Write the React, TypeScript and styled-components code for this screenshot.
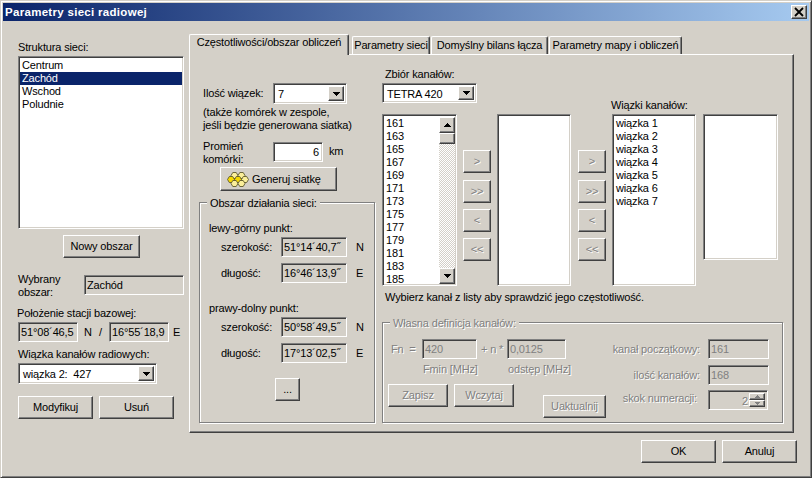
import React from "react";
import styled, {createGlobalStyle, css} from "styled-components";

const face = "#d4d0c8";
const grayText = "#808080";

const raised = css`
  border: 1px solid;
  border-color: #fff #404040 #404040 #fff;
  box-shadow: inset -1px -1px ${grayText};
`;

const sunken = css`
  border: 1px solid;
  border-color: ${grayText} #fff #fff ${grayText};
  box-shadow: inset 1px 1px #404040, inset -1px -1px ${face};
`;

const disabledText = css`
  color: ${grayText};
  text-shadow: 1px 1px 0 #fff;
`;

const GlobalStyle = createGlobalStyle`
  * {
    box-sizing: border-box;
  }
  html, body {
    margin: 0;
    padding: 0;
    background: ${face};
  }
  body {
    font-family: "Liberation Sans", Arial, sans-serif;
    font-size: 11px;
    letter-spacing: -0.15px;
    line-height: 13px;
    color: #000;
  }
`;

const Window = styled.div`
  width: 812px;
  height: 478px;
  padding: 2px;
  background: ${face};
  border: 1px solid;
  border-color: ${face} #404040 #404040 ${face};
  box-shadow: inset 1px 1px #fff, inset -1px -1px ${grayText};
  overflow: hidden;
`;

const TitleBar = styled.div`
  height: 18px;
  display: flex;
  align-items: center;
  justify-content: space-between;
  padding: 0 2px;
  background: linear-gradient(90deg, #0a246a, #a6caf0);
`;

const TitleText = styled.div`
  color: #fff;
  font-weight: bold;
  font-size: 11.5px;
  letter-spacing: 0.3px;
`;

const CloseButton = styled.div`
  width: 16px;
  height: 14px;
  display: flex;
  align-items: center;
  justify-content: center;
  background: ${face};
  ${raised}
`;

const Body = styled.div`
  display: flex;
  padding-left: 15px;
`;

const LeftColumn = styled.div`
  width: 166px;
  padding-top: 20px;
  display: flex;
  flex-direction: column;
`;

const Caption = styled.div<{$mt?: number; $ml?: number}>`
  margin-top: ${p => p.$mt ?? 0}px;
  margin-left: ${p => p.$ml ?? 0}px;
  white-space: nowrap;
`;

const ListBox = styled.div<{$w: number; $h: number; $mt?: number; $ml?: number}>`
  width: ${p => p.$w}px;
  height: ${p => p.$h}px;
  margin-top: ${p => p.$mt ?? 0}px;
  margin-left: ${p => p.$ml ?? 0}px;
  flex: none;
  display: flex;
  padding: 2px 1px 1px;
  background: #fff;
  ${sunken}
`;

const ListItems = styled.div`
  flex: 1;
  min-width: 0;
`;

const ListItem = styled.div<{$selected?: boolean}>`
  height: 13px;
  padding-left: 2px;
  white-space: nowrap;
  background: ${p => (p.$selected ? "#0a246a" : "transparent")};
  color: ${p => (p.$selected ? "#fff" : "#000")};
`;

const Button = styled.div<{$w: number; $h?: number; $disabled?: boolean}>`
  width: ${p => p.$w}px;
  height: ${p => p.$h ?? 23}px;
  flex: none;
  display: flex;
  align-items: center;
  justify-content: center;
  background: ${face};
  white-space: nowrap;
  ${raised}
  ${p => p.$disabled && disabledText}
`;

const NewAreaButton = styled(Button)`
  margin: 6px 0 0 45px;
`;

const SelectedRow = styled.div`
  display: flex;
  justify-content: space-between;
  margin-top: 15px;
  height: 26px;
`;

const TextField = styled.div<{$w: number; $disabled?: boolean; $right?: boolean}>`
  width: ${p => p.$w}px;
  height: 20px;
  flex: none;
  padding: 0 3px 0 2px;
  line-height: 18px;
  white-space: nowrap;
  overflow: hidden;
  background: ${p => (p.$right ? "#fff" : face)};
  text-align: ${p => (p.$right ? "right" : "left")};
  color: ${p => (p.$disabled ? grayText : "#000")};
  text-shadow: none;
  ${sunken}
`;

const SelectedField = styled(TextField)`
  margin-top: 2px;
`;

const InlineRow = styled.div<{$mt?: number}>`
  display: flex;
  align-items: center;
  margin-top: ${p => p.$mt ?? 0}px;
`;

const RowText = styled.span<{$ml: number; $w?: number}>`
  margin-left: ${p => p.$ml}px;
  width: ${p => (p.$w ? `${p.$w}px` : "auto")};
  flex: none;
  white-space: nowrap;
`;

const Combo = styled.div<{$w: number; $h?: number}>`
  width: ${p => p.$w}px;
  height: ${p => p.$h ?? 21}px;
  flex: none;
  display: flex;
  align-items: stretch;
  padding: 2px 2px 2px 3px;
  background: #fff;
  ${sunken}
`;

const ComboValue = styled.div`
  flex: 1;
  line-height: 16px;
  padding-left: 1px;
  white-space: nowrap;
  overflow: hidden;
`;

const ArrowButton = styled.div<{$h?: number}>`
  width: 16px;
  height: ${p => (p.$h ? `${p.$h}px` : "auto")};
  flex: none;
  display: flex;
  align-items: center;
  justify-content: center;
  background: ${face};
  ${raised}
`;

const ComboMargin = styled.div`
  margin-top: 2px;
`;

const ButtonRow = styled.div<{$mt: number}>`
  display: flex;
  gap: 6px;
  margin-top: ${p => p.$mt}px;
`;

const RightColumn = styled.div`
  width: 608px;
  margin-left: 5px;
  padding-top: 13px;
`;

const TabStrip = styled.div`
  display: flex;
  align-items: flex-end;
  height: 20px;
  padding-right: 3px;
`;

const Tab = styled.div<{$active?: boolean; $w: number; $ml?: number}>`
  position: relative;
  z-index: ${p => (p.$active ? 2 : 0)};
  width: ${p => p.$w}px;
  height: ${p => (p.$active ? 21 : 18)}px;
  margin-bottom: ${p => (p.$active ? -1 : 0)}px;
  margin-left: ${p => p.$ml ?? 0}px;
  flex: none;
  text-align: center;
  line-height: ${p => (p.$active ? 15 : 17)}px;
  white-space: nowrap;
  background: ${face};
  border-top: 1px solid #fff;
  border-left: 1px solid #fff;
  border-right: 1px solid #404040;
  border-radius: 2px 2px 0 0;
  box-shadow: inset -1px 0 ${grayText};
`;

const TabPanel = styled.div`
  position: relative;
  z-index: 1;
  width: 605px;
  height: 379px;
  display: flex;
  padding-left: 9px;
  background: ${face};
  ${raised}
`;

const SettingsColumn = styled.div`
  width: 176px;
  padding-top: 28px;
  display: flex;
  flex-direction: column;
`;

const SettingsRow = styled.div<{$mt?: number; $h?: number; $start?: boolean}>`
  display: flex;
  align-items: ${p => (p.$start ? "flex-start" : "center")};
  margin-top: ${p => p.$mt ?? 0}px;
  margin-left: 4px;
  height: ${p => (p.$h ? `${p.$h}px` : "auto")};
`;

const SettingsLabel = styled.div`
  width: 70px;
  flex: none;
`;

const RadiusField = styled(TextField)`
  margin-top: 2px;
`;

const KmLabel = styled.span`
  margin: 5px 0 0 6px;
`;

const GenerateButton = styled(Button)`
  margin: 1px 0 0 21px;
  justify-content: flex-start;
  gap: 3px;
  padding-left: 6px;
`;

const GroupBox = styled.div<{$w: number; $h: number; $mt: number}>`
  position: relative;
  width: ${p => p.$w}px;
  height: ${p => p.$h}px;
  margin-top: ${p => p.$mt}px;
  flex: none;
  border: 1px solid ${grayText};
  box-shadow: inset 1px 1px #fff, 1px 1px #fff;
`;

const Legend = styled.div<{$disabled?: boolean}>`
  position: absolute;
  left: 7px;
  top: -6px;
  padding: 0 3px;
  background: ${face};
  white-space: nowrap;
  ${p => p.$disabled && disabledText}
`;

const AreaContent = styled.div`
  padding: 19px 0 0 9px;
  display: flex;
  flex-direction: column;
`;

const CoordRow = styled.div<{$mt: number}>`
  display: flex;
  align-items: center;
  margin-top: ${p => p.$mt}px;
`;

const CoordLabel = styled.div`
  width: 60px;
  margin-left: 12px;
  flex: none;
`;

const CoordUnit = styled.div`
  margin-left: 9px;
`;

const MoreButton = styled(Button)`
  margin: 15px 0 0 66px;
`;

const ChannelsColumn = styled.div`
  margin-left: 7px;
  width: 402px;
  padding-top: 13px;
`;

const ChannelsTop = styled.div`
  display: flex;
  height: 46px;
`;

const ChannelsSet = styled.div`
  width: 229px;
  flex: none;
`;

const BundlesLabel = styled.div`
  align-self: flex-end;
  margin-bottom: 2px;
`;

const ListsRow = styled.div`
  display: flex;
  align-items: flex-start;
  height: 172px;
`;

const TransferColumn = styled.div<{$ml: number; $mr: number}>`
  display: flex;
  flex-direction: column;
  gap: 6px;
  margin: 36px ${p => p.$mr}px 0 ${p => p.$ml}px;
  flex: none;
`;

const TransferButton = styled(Button)`
  &:first-child {
    margin-bottom: 1px;
  }
`;

const ScrollBar = styled.div`
  width: 16px;
  flex: none;
  display: flex;
  flex-direction: column;
  background-color: #fff;
  background-image: conic-gradient(${face} 25%, #fff 0 50%, ${face} 0 75%, #fff 0);
  background-size: 2px 2px;
`;

const ScrollThumb = styled.div`
  width: 16px;
  height: 11px;
  flex: none;
  background: ${face};
  ${raised}
`;

const ScrollTrack = styled.div`
  flex: 1;
`;

const OwnDefinition = styled.div`
  display: flex;
  padding: 16px 0 0 5px;
`;

const DefinitionLeft = styled.div`
  width: 218px;
  flex: none;
`;

const CaptionRow = styled.div`
  height: 13px;
  margin-top: 4px;
  display: flex;
`;

const DisabledRowText = styled(RowText)`
  ${disabledText}
`;

const DefinitionRight = styled.div`
  width: 163px;
  flex: none;
  display: flex;
  flex-direction: column;
`;

const DefinitionRow = styled.div<{$mt?: number}>`
  display: flex;
  align-items: center;
  justify-content: flex-end;
  gap: 8px;
  margin-top: ${p => p.$mt ?? 0}px;
  white-space: nowrap;
  ${disabledText}
`;

const StepLabel = styled.span`
  margin: 0 3px 4px 0;
`;

const DefinitionButtons = styled.div`
  display: flex;
  align-items: flex-start;
  margin-top: 8px;
`;

const SaveButton = styled(Button)`
  margin-right: 6px;
`;

const UpdateButton = styled(Button)`
  margin: 11px 0 0 29px;
`;

const Spin = styled.div`
  width: 60px;
  height: 20px;
  margin-right: 1px;
  flex: none;
  display: flex;
  padding: 2px;
  background: ${face};
  ${sunken}
`;

const SpinValue = styled.div`
  flex: 1;
  text-align: right;
  line-height: 16px;
  padding-right: 1px;
`;

const SpinButtons = styled.div`
  width: 16px;
  display: flex;
  flex-direction: column;
`;

const SpinButton = styled.div`
  flex: 1;
  display: flex;
  align-items: center;
  justify-content: center;
  background: ${face};
  ${raised}
`;

const Footer = styled.div`
  display: flex;
  justify-content: flex-end;
  gap: 6px;
  margin-top: 7px;
`;

const Arrow = ({dir = "down", color = "#000", size = 7}: {dir?: "up" | "down"; color?: string; size?: number}) => (
  <svg width={size} height={Math.ceil(size / 2)} viewBox="0 0 7 4" shapeRendering="crispEdges">
    <path d={dir === "down" ? "M0 0h7L3.5 4z" : "M0 4h7L3.5 0z"} fill={color} />
  </svg>
);

const CloseIcon = () => (
  <svg width="10" height="10" viewBox="0 0 10 10">
    <path d="M1 1l8 8M9 1L1 9" stroke="#000" strokeWidth="1.8" fill="none" />
  </svg>
);

// seven cells of the radio grid, the two bright ones on the middle row
const hexes: [number, number, string][] = [
  [7.5, 3.5, "#fbef9a"],
  [14.5, 3.5, "#fbef9a"],
  [4, 7.5, "#f5d800"],
  [11, 7.5, "#f5d800"],
  [18, 7.5, "#fbef9a"],
  [7.5, 11.5, "#fbef9a"],
  [14.5, 11.5, "#fbef9a"],
];

const HoneycombIcon = () => (
  <svg width="22" height="15" viewBox="0 0 22 15">
    {hexes.map(([x, y, fill]) => (
      <polygon
        key={`${x}-${y}`}
        points={`${x - 3.5},${y} ${x - 1.7},${y - 3} ${x + 1.7},${y - 3} ${x + 3.5},${y} ${x + 1.7},${y + 3} ${x - 1.7},${y + 3}`}
        fill={fill}
        stroke="#5f5a2c"
        strokeWidth="0.9"
      />
    ))}
  </svg>
);

const networkAreas = ["Centrum", "Zachód", "Wschod", "Poludnie"];
const channels = Array.from({length: 13}, (_, i) => String(161 + i * 2));
const bundles = [1, 2, 3, 4, 5, 6, 7].map(n => `wiązka ${n}`);
const transferLabels = [">", ">>", "<", "<<"];

const Transfer = ({ml, mr}: {ml: number; mr: number}) => (
  <TransferColumn $ml={ml} $mr={mr}>
    {transferLabels.map(label => (
      <TransferButton key={label} $w={28} $disabled>
        {label}
      </TransferButton>
    ))}
  </TransferColumn>
);

const Coord = ({label, value, unit, mt}: {label: string; value: string; unit: string; mt: number}) => (
  <CoordRow $mt={mt}>
    <CoordLabel>{label}</CoordLabel>
    <TextField $w={66}>{value}</TextField>
    <CoordUnit>{unit}</CoordUnit>
  </CoordRow>
);

export default function App() {
  return (
    <Window>
      <GlobalStyle />
      <TitleBar>
        <TitleText>Parametry sieci radiowej</TitleText>
        <CloseButton>
          <CloseIcon />
        </CloseButton>
      </TitleBar>
      <Body>
        <LeftColumn>
          <Caption>Struktura sieci:</Caption>
          <ListBox $w={166} $h={173} $mt={2}>
            <ListItems>
              {networkAreas.map(area => (
                <ListItem key={area} $selected={area === "Zachód"}>
                  {area}
                </ListItem>
              ))}
            </ListItems>
          </ListBox>
          <NewAreaButton $w={77}>Nowy obszar</NewAreaButton>
          <SelectedRow>
            <div>
              Wybrany
              <br />
              obszar:
            </div>
            <SelectedField $w={100}>Zachód</SelectedField>
          </SelectedRow>
          <Caption $mt={8} $ml={-1}>Położenie stacji bazowej:</Caption>
          <InlineRow $mt={2}>
            <TextField $w={60}>51°08´46,5</TextField>
            <RowText $ml={6} $w={15}>N</RowText>
            <RowText $ml={0} $w={10}>/</RowText>
            <TextField $w={60}>16°55´18,9</TextField>
            <RowText $ml={4}>E</RowText>
          </InlineRow>
          <Caption $mt={6}>Wiązka kanałów radiowych:</Caption>
          <ComboMargin>
            <Combo $w={139}>
              <ComboValue>wiązka 2:&nbsp; 427</ComboValue>
              <ArrowButton>
                <Arrow />
              </ArrowButton>
            </Combo>
          </ComboMargin>
          <ButtonRow $mt={12}>
            <Button $w={75}>Modyfikuj</Button>
            <Button $w={75}>Usuń</Button>
          </ButtonRow>
        </LeftColumn>
        <RightColumn>
          <TabStrip>
            <Tab $active $w={160}>Częstotliwości/obszar obliczeń</Tab>
            <Tab $w={78} $ml={3}>Parametry sieci</Tab>
            <Tab $w={117} $ml={1}>Domyślny bilans łącza</Tab>
            <Tab $w={133} $ml={1}>Parametry mapy i obliczeń</Tab>
          </TabStrip>
          <TabPanel>
            <SettingsColumn>
              <SettingsRow>
                <SettingsLabel>Ilość wiązek:</SettingsLabel>
                <Combo $w={74}>
                  <ComboValue>7</ComboValue>
                  <ArrowButton>
                    <Arrow />
                  </ArrowButton>
                </Combo>
              </SettingsRow>
              <Caption $mt={2} $ml={4}>
                (także komórek w zespole,
                <br />
                jeśli będzie generowana siatka)
              </Caption>
              <SettingsRow $mt={8} $h={26} $start>
                <SettingsLabel>
                  Promień
                  <br />
                  komórki:
                </SettingsLabel>
                <RadiusField $w={50} $right>6</RadiusField>
                <KmLabel>km</KmLabel>
              </SettingsRow>
              <GenerateButton $w={117} $h={24}>
                <HoneycombIcon />
                Generuj siatkę
              </GenerateButton>
              <GroupBox $w={176} $h={221} $mt={11}>
                <Legend>Obszar działania sieci:</Legend>
                <AreaContent>
                  <div>lewy-górny punkt:</div>
                  <Coord label="szerokość:" value="51°14´40,7˝" unit="N" mt={2} />
                  <Coord label="długość:" value="16°46´13,9˝" unit="E" mt={6} />
                  <Caption $mt={19}>prawy-dolny punkt:</Caption>
                  <Coord label="szerokość:" value="50°58´49,5˝" unit="N" mt={2} />
                  <Coord label="długość:" value="17°13´02,5˝" unit="E" mt={6} />
                  <MoreButton $w={25}>...</MoreButton>
                </AreaContent>
              </GroupBox>
            </SettingsColumn>
            <ChannelsColumn>
              <ChannelsTop>
                <ChannelsSet>
                  <Caption $ml={3}>Zbiór kanałów:</Caption>
                  <ComboMargin>
                    <Combo $w={95} $h={20}>
                      <ComboValue>TETRA 420</ComboValue>
                      <ArrowButton>
                        <Arrow />
                      </ArrowButton>
                    </Combo>
                  </ComboMargin>
                </ChannelsSet>
                <BundlesLabel>Wiązki kanałów:</BundlesLabel>
              </ChannelsTop>
              <ListsRow>
                <ListBox $w={75} $h={172}>
                  <ListItems>
                    {channels.map(channel => (
                      <ListItem key={channel}>{channel}</ListItem>
                    ))}
                  </ListItems>
                  <ScrollBar>
                    <ArrowButton $h={16}>
                      <Arrow dir="up" />
                    </ArrowButton>
                    <ScrollThumb />
                    <ScrollTrack />
                    <ArrowButton $h={16}>
                      <Arrow />
                    </ArrowButton>
                  </ScrollBar>
                </ListBox>
                <Transfer ml={6} mr={6} />
                <ListBox $w={74} $h={172} />
                <Transfer ml={7} mr={6} />
                <ListBox $w={84} $h={172}>
                  <ListItems>
                    {bundles.map(bundle => (
                      <ListItem key={bundle}>{bundle}</ListItem>
                    ))}
                  </ListItems>
                </ListBox>
                <ListBox $w={75} $h={146} $ml={7} />
              </ListsRow>
              <Caption $mt={5} $ml={3}>Wybierz kanał z listy aby sprawdzić jego częstotliwość.</Caption>
              <GroupBox $w={401} $h={101} $mt={18}>
                <Legend $disabled>Własna definicja kanałów:</Legend>
                <OwnDefinition>
                  <DefinitionLeft>
                    <InlineRow>
                      <DisabledRowText $ml={3} $w={31}>Fn&nbsp; =</DisabledRowText>
                      <TextField $w={55} $disabled>420</TextField>
                      <DisabledRowText $ml={4} $w={26}>+ n *</DisabledRowText>
                      <TextField $w={59} $disabled>0,0125</TextField>
                    </InlineRow>
                    <CaptionRow>
                      <DisabledRowText $ml={35} $w={85}>Fmin [MHz]</DisabledRowText>
                      <DisabledRowText $ml={0}>odstęp [MHz]</DisabledRowText>
                    </CaptionRow>
                    <DefinitionButtons>
                      <SaveButton $w={60} $disabled>Zapisz</SaveButton>
                      <Button $w={60} $disabled>Wczytaj</Button>
                      <UpdateButton $w={63} $disabled>Uaktualnij</UpdateButton>
                    </DefinitionButtons>
                  </DefinitionLeft>
                  <DefinitionRight>
                    <DefinitionRow>
                      kanał początkowy:
                      <TextField $w={61} $disabled>161</TextField>
                    </DefinitionRow>
                    <DefinitionRow $mt={6}>
                      ilość kanałów:
                      <TextField $w={61} $disabled>168</TextField>
                    </DefinitionRow>
                    <DefinitionRow $mt={5}>
                      <StepLabel>skok numeracji:</StepLabel>
                      <Spin>
                        <SpinValue>2</SpinValue>
                        <SpinButtons>
                          <SpinButton>
                            <Arrow dir="up" color={grayText} size={5} />
                          </SpinButton>
                          <SpinButton>
                            <Arrow color={grayText} size={5} />
                          </SpinButton>
                        </SpinButtons>
                      </Spin>
                    </DefinitionRow>
                  </DefinitionRight>
                </OwnDefinition>
              </GroupBox>
            </ChannelsColumn>
          </TabPanel>
          <Footer>
            <Button $w={75}>OK</Button>
            <Button $w={75}>Anuluj</Button>
          </Footer>
        </RightColumn>
      </Body>
    </Window>
  );
}
